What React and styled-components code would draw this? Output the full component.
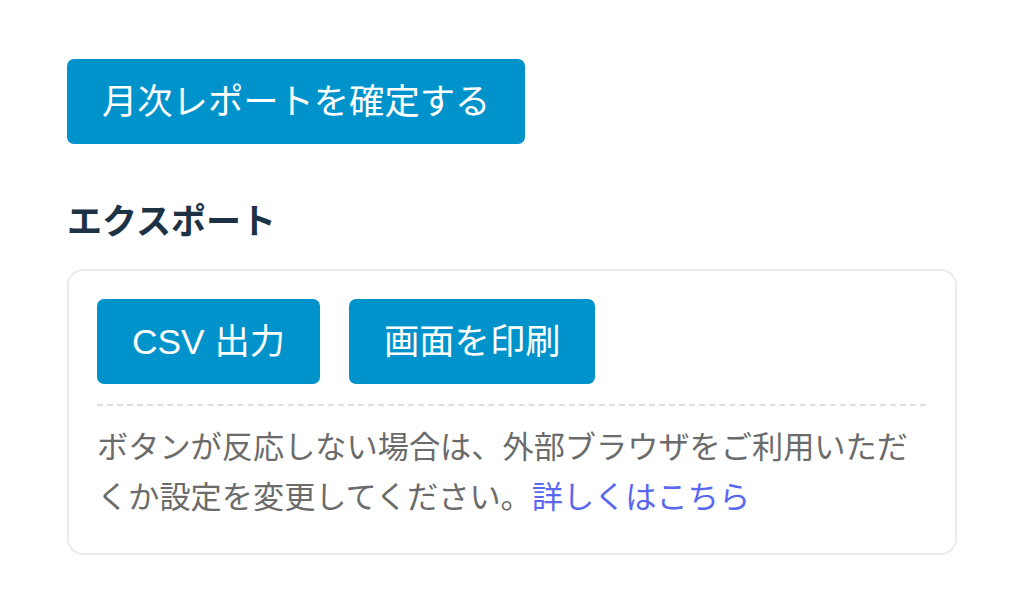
import React from "react";
import styled, { createGlobalStyle } from "styled-components";

const GlobalStyle = createGlobalStyle`
  body {
    margin: 0;
    background: #ffffff;
    font-family: "Liberation Sans", "Noto Sans CJK JP", sans-serif;
  }
`;

export default function App() {
  return (
    <Page>
      <GlobalStyle />
      <PrimaryButton>月次レポートを確定する</PrimaryButton>
      <Heading>エクスポート</Heading>
      <Card>
        <ButtonRow>
          <PrimaryButton>CSV 出力</PrimaryButton>
          <PrimaryButton>画面を印刷</PrimaryButton>
        </ButtonRow>
        <Divider />
        <Note>
          ボタンが反応しない場合は、外部ブラウザをご利用いただくか設定を変更してください。
          <Link href="#">詳しくはこちら</Link>
        </Note>
      </Card>
    </Page>
  );
}

const Page = styled.div`
  display: flex;
  flex-direction: column;
  align-items: flex-start;
  padding: 59px 0 0 67px;
  width: 890px;
`;

const PrimaryButton = styled.button`
  display: inline-flex;
  align-items: center;
  justify-content: center;
  height: 85px;
  padding: 0 35px;
  border: none;
  border-radius: 7px;
  background: #0093cb;
  color: #ffffff;
  font-family: inherit;
  font-size: 35.3px;
  line-height: 1;
  cursor: pointer;
`;

const Heading = styled.h2`
  margin: 52px 0 22px;
  font-size: 35px;
  font-weight: 700;
  line-height: 51px;
  color: #1e3246;
`;

const Card = styled.div`
  box-sizing: border-box;
  width: 890px;
  padding: 28px 29px 30px 28px;
  border: 2px solid #ebebeb;
  border-radius: 16px;
  align-self: stretch;
`;

const ButtonRow = styled.div`
  display: flex;
  gap: 29px;
`;

const Divider = styled.hr`
  margin: 20px 0 17px;
  border: none;
  border-top: 2px dashed #dedede;
`;

const Note = styled.p`
  margin: 0;
  font-size: 31.2px;
  line-height: 50px;
  color: #6b6b6b;
`;

const Link = styled.a`
  color: #5a68f0;
  text-decoration: none;
`;
